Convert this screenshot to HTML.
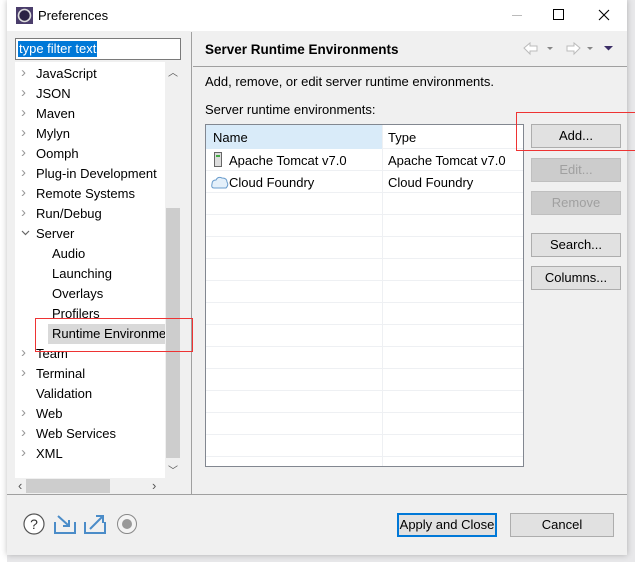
<!DOCTYPE html>
<html><head><style>
*{margin:0;padding:0;box-sizing:border-box}
body{width:635px;height:562px;background:#e8e8ea;font-family:"Liberation Sans",sans-serif;font-size:13px;color:#000;position:relative;overflow:hidden}
.a{position:absolute}
.dlg{left:7px;top:0;width:620px;height:555px;background:#f0f0f0;box-shadow:0 0 6px rgba(0,0,0,.25)}
.title{left:7px;top:0;width:620px;height:31px;background:#fff}
.tree div{position:absolute;left:0;height:20px;line-height:20px;white-space:nowrap}
.chev{color:#999;font-size:15px;position:absolute;top:-1px}
.btn{position:absolute;background:#e1e1e1;border:1px solid #adadad;text-align:center;line-height:22px;height:24px}
.dis{color:#a0a0a0;background:#ccc;border-color:#bfbfbf}
.row{position:absolute;left:0;width:318px;height:22px;border-bottom:1px solid #eef0f3}
</style></head><body>
<div class="a" style="left:0;top:0;width:7px;height:562px;background:#fff"></div>
<div class="a dlg"></div>
<div class="a title"></div>
<svg class="a" style="left:16px;top:7px" width="17" height="17" viewBox="0 0 17 17"><rect width="17" height="17" fill="#4a3d6b"/><circle cx="8.5" cy="8.5" r="6" fill="#2c2444" stroke="#ddd" stroke-width="1.6"/></svg>
<div class="a" style="left:38px;top:8px;font-size:13px">Preferences</div>
<div class="a" style="left:512px;top:15px;width:10px;height:1px;background:#bbb"></div>
<div class="a" style="left:553px;top:9px;width:11px;height:11px;border:1px solid #000"></div>
<svg class="a" style="left:598px;top:9px" width="12" height="12"><path d="M1 1 L11 11 M11 1 L1 11" stroke="#000" stroke-width="1.1"/></svg>

<div class="a" style="left:15px;top:38px;width:166px;height:22px;background:#fff;border:1px solid #7a7a7a"></div>
<div class="a" style="left:18px;top:41px;height:16px;background:#0078d7;color:#fff;padding:0 1px;line-height:16px">type filter text</div>

<div class="a" style="left:15px;top:62px;width:151px;height:416px;background:#fff"></div>
<div class="a" style="left:165px;top:62px;width:16px;height:416px;background:#f0f0f0"></div>
<div class="a" style="left:166px;top:208px;width:14px;height:250px;background:#cdcdcd"></div>
<div class="a" style="left:168px;top:64px;font-size:10px;color:#555">︿</div>
<div class="a" style="left:168px;top:462px;font-size:10px;color:#555">﹀</div>
<div class="a" style="left:15px;top:478px;width:151px;height:16px;background:#f0f0f0"></div>
<div class="a" style="left:26px;top:479px;width:84px;height:14px;background:#cdcdcd"></div>
<div class="a" style="left:18px;top:478px;font-size:13px;color:#555">‹</div>
<div class="a" style="left:152px;top:478px;font-size:13px;color:#555">›</div>
<div class="a" style="left:191px;top:32px;width:1px;height:462px;background:#a0a0a0"></div>

<div class="a tree" style="left:21px;top:64px;width:150px;height:410px">
<div style="top:0"><span class="chev">›</span><span style="margin-left:15px">JavaScript</span></div>
<div style="top:20px"><span class="chev">›</span><span style="margin-left:15px">JSON</span></div>
<div style="top:40px"><span class="chev">›</span><span style="margin-left:15px">Maven</span></div>
<div style="top:60px"><span class="chev">›</span><span style="margin-left:15px">Mylyn</span></div>
<div style="top:80px"><span class="chev">›</span><span style="margin-left:15px">Oomph</span></div>
<div style="top:100px"><span class="chev">›</span><span style="margin-left:15px">Plug-in Development</span></div>
<div style="top:120px"><span class="chev">›</span><span style="margin-left:15px">Remote Systems</span></div>
<div style="top:140px"><span class="chev">›</span><span style="margin-left:15px">Run/Debug</span></div>
<div style="top:160px"><svg style="position:absolute;left:0;top:6px" width="9" height="6"><path d="M1 1 L4.5 4.5 L8 1" fill="none" stroke="#666" stroke-width="1.2"/></svg><span style="margin-left:15px">Server</span></div>
<div style="top:180px;left:31px">Audio</div>
<div style="top:200px;left:31px">Launching</div>
<div style="top:220px;left:31px">Overlays</div>
<div style="top:240px;left:31px">Profilers</div>
<div style="top:260px;left:27px;width:117px;background:#d9d9d9;padding-left:4px;overflow:hidden">Runtime Environments</div>
<div style="top:280px"><span class="chev">›</span><span style="margin-left:15px">Team</span></div>
<div style="top:300px"><span class="chev">›</span><span style="margin-left:15px">Terminal</span></div>
<div style="top:320px;left:15px">Validation</div>
<div style="top:340px"><span class="chev">›</span><span style="margin-left:15px">Web</span></div>
<div style="top:360px"><span class="chev">›</span><span style="margin-left:15px">Web Services</span></div>
<div style="top:380px"><span class="chev">›</span><span style="margin-left:15px">XML</span></div>
</div>
<div class="a" style="left:35px;top:318px;width:158px;height:34px;border:1px solid #e33"></div>

<div class="a" style="left:205px;top:42px;font-weight:bold;font-size:13.5px">Server Runtime Environments</div>
<svg class="a" style="left:522px;top:40px" width="95" height="18">
<path d="M2 8 L8 3 V6 H15 V11 H8 V14 Z" fill="#fff" stroke="#bbb"/>
<path d="M25 7 h6 l-3 3 z" fill="#888"/>
<path d="M58 8 L52 3 V6 H45 V11 H52 V14 Z" fill="#fff" stroke="#bbb"/>
<path d="M65 7 h6 l-3 3 z" fill="#888"/>
<path d="M82 6 h9 l-4.5 4.5 z" fill="#3b2e66"/>
</svg>
<div class="a" style="left:193px;top:66px;width:434px;height:1px;background:#a0a0a0"></div>
<div class="a" style="left:205px;top:74px">Add, remove, or edit server runtime environments.</div>
<div class="a" style="left:205px;top:102px">Server runtime environments:</div>

<div class="a" style="left:205px;top:124px;width:319px;height:343px;background:#fff;border:1px solid #828790;overflow:hidden">
<div class="row" style="top:0;height:24px;background:#fff"></div>
<div class="a" style="left:0;top:0;width:176px;height:24px;background:#d9ebf9"></div>
<div class="a" style="left:7px;top:5px">Name</div><div class="a" style="left:182px;top:5px">Type</div>
<div class="row" style="top:24px"></div><div class="row" style="top:46px"></div><div class="row" style="top:68px"></div><div class="row" style="top:90px"></div><div class="row" style="top:112px"></div><div class="row" style="top:134px"></div><div class="row" style="top:156px"></div><div class="row" style="top:178px"></div><div class="row" style="top:200px"></div><div class="row" style="top:222px"></div><div class="row" style="top:244px"></div><div class="row" style="top:266px"></div><div class="row" style="top:288px"></div><div class="row" style="top:310px"></div>
<div class="a" style="left:176px;top:0;width:1px;height:343px;background:#eef0f3"></div>
<svg class="a" style="left:8px;top:27px" width="8" height="15"><rect x=".5" y=".5" width="7" height="14" fill="#ddd" stroke="#666"/><rect x="2" y="3" width="4" height="2" fill="#4a4"/></svg>
<div class="a" style="left:23px;top:28px">Apache Tomcat v7.0</div><div class="a" style="left:182px;top:28px">Apache Tomcat v7.0</div>
<svg class="a" style="left:5px;top:51px" width="18" height="13"><path d="M3 12 Q0 12 1 8 Q1 4 5 4 Q7 0 11 2 Q16 2 16 6 Q18 9 15 12 Z" fill="#e4f0fa" stroke="#6a9ccc"/></svg>
<div class="a" style="left:23px;top:50px">Cloud Foundry</div><div class="a" style="left:182px;top:50px">Cloud Foundry</div>
</div>

<div class="btn" style="left:531px;top:124px;width:90px">Add...</div>
<div class="btn dis" style="left:531px;top:158px;width:90px">Edit...</div>
<div class="btn dis" style="left:531px;top:191px;width:90px">Remove</div>
<div class="btn" style="left:531px;top:233px;width:90px">Search...</div>
<div class="btn" style="left:531px;top:266px;width:90px">Columns...</div>
<div class="a" style="left:516px;top:112px;width:120px;height:39px;border:1px solid #e33"></div>

<div class="a" style="left:7px;top:494px;width:620px;height:1px;background:#a0a0a0"></div>
<svg class="a" style="left:22px;top:512px" width="120" height="24">
<circle cx="12" cy="12" r="10" fill="#fff" stroke="#555" stroke-width="1.2"/><text x="12" y="17" font-size="14" text-anchor="middle" fill="#333" font-family="Liberation Sans">?</text>
<path d="M33 10 v11 h20 v-11" fill="none" stroke="#4b8cc8" stroke-width="2"/><path d="M36 4 l10 9 M47 8 v6 h-6" fill="none" stroke="#4b8cc8" stroke-width="2"/>
<path d="M63 10 v11 h20 v-11" fill="none" stroke="#4b8cc8" stroke-width="2"/><path d="M68 17 l12 -12 M74 4 h7 v7" fill="none" stroke="#4b8cc8" stroke-width="2"/>
<circle cx="105" cy="12" r="9.5" fill="#f4f4f4" stroke="#888"/><circle cx="105" cy="12" r="5" fill="#999"/>
</svg>
<div class="btn" style="left:397px;top:513px;width:100px;border:2px solid #0078d7;line-height:20px">Apply and Close</div>
<div class="btn" style="left:510px;top:513px;width:104px">Cancel</div>
</body></html>
